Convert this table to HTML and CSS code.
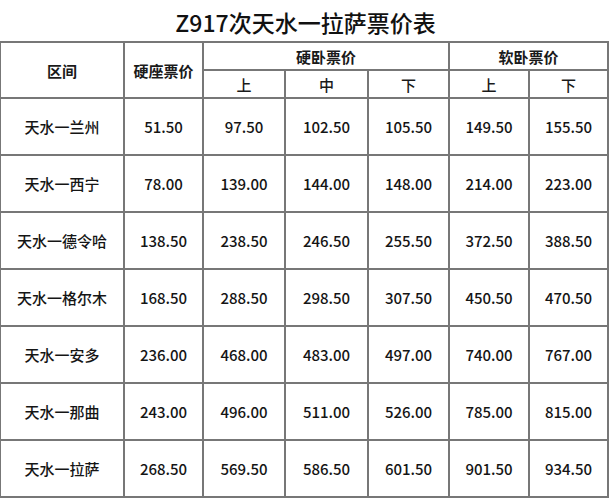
FILE: index.html
```html
<!DOCTYPE html>
<html lang="zh-CN">
<head>
<meta charset="utf-8">
<title>Z917次天水一拉萨票价表</title>
<link rel="stylesheet" href="styles.css">
</head>
<body>
<div class="sheet">
  <h1 class="title">Z917次天水一拉萨票价表</h1>
  <table class="fares">
    <colgroup>
      <col class="c-route"><col class="c-seat"><col class="c-b1"><col class="c-b2"><col class="c-b3"><col class="c-s1"><col class="c-s2">
    </colgroup>
    <thead>
      <tr class="h1">
        <th rowspan="2">区间</th>
        <th rowspan="2">硬座票价</th>
        <th colspan="3">硬卧票价</th>
        <th colspan="2">软卧票价</th>
      </tr>
      <tr class="h2">
        <th>上</th><th>中</th><th>下</th><th>上</th><th>下</th>
      </tr>
    </thead>
    <tbody>
      <tr><td>天水一兰州</td><td>51.50</td><td>97.50</td><td>102.50</td><td>105.50</td><td>149.50</td><td>155.50</td></tr>
      <tr><td>天水一西宁</td><td>78.00</td><td>139.00</td><td>144.00</td><td>148.00</td><td>214.00</td><td>223.00</td></tr>
      <tr><td>天水一德令哈</td><td>138.50</td><td>238.50</td><td>246.50</td><td>255.50</td><td>372.50</td><td>388.50</td></tr>
      <tr><td>天水一格尔木</td><td>168.50</td><td>288.50</td><td>298.50</td><td>307.50</td><td>450.50</td><td>470.50</td></tr>
      <tr><td>天水一安多</td><td>236.00</td><td>468.00</td><td>483.00</td><td>497.00</td><td>740.00</td><td>767.00</td></tr>
      <tr><td>天水一那曲</td><td>243.00</td><td>496.00</td><td>511.00</td><td>526.00</td><td>785.00</td><td>815.00</td></tr>
      <tr><td>天水一拉萨</td><td>268.50</td><td>569.50</td><td>586.50</td><td>601.50</td><td>901.50</td><td>934.50</td></tr>
    </tbody>
  </table>
</div>
</body>
</html>
```
FILE: styles.css
```css
html, body {
  margin: 0;
  padding: 0;
  background: #ffffff;
}
body {
  font-family: "Noto Sans CJK SC", "Noto Sans", sans-serif;
  color: #151515;
  width: 609px;
  height: 500px;
  overflow: hidden;
}
.sheet {
  width: 609px;
}
.title {
  margin: 0;
  height: 41px;
  line-height: 44px;
  font-size: 23px;
  font-weight: 500;
  text-align: center;
  padding-left: 2px;
  color: #111;
}
.fares {
  border-collapse: collapse;
  table-layout: fixed;
  margin-left: -1px;
  width: 608px;
}
.c-route { width: 124px; }
.c-seat { width: 79px; }
.c-b1 { width: 82px; }
.c-b2 { width: 83px; }
.c-b3 { width: 81px; }
.c-s1 { width: 80px; }
.c-s2 { width: 79px; }
.fares th,
.fares td {
  border: 2px solid #777;
  padding: 0;
  text-align: center;
  vertical-align: middle;
  font-size: 15px;
  white-space: nowrap;
}
.fares th {
  font-weight: 700;
  color: #1a1a1a;
}
.fares .h1 th { height: 26px; }
.fares .h2 th { height: 26px; font-weight: 500; }
.fares td {
  height: 55px;
  font-weight: 500;
  color: #151515;
}
```
